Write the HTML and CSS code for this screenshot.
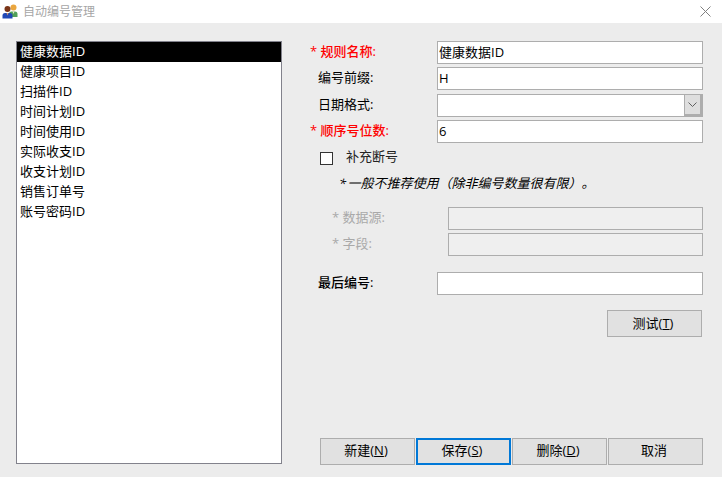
FILE: index.html
```html
<!DOCTYPE html>
<html lang="zh-CN">
<head>
<meta charset="utf-8">
<title>自动编号管理</title>
<link rel="stylesheet" href="styles.css">
</head>
<body>
<div class="titlebar">
  <svg class="app-icon" width="16" height="15" viewBox="0 0 16 15">
    <circle cx="11.500" cy="3.500" r="3" fill="#eaa63f"/>
    <path d="M7 13V10Q7 7.500 9.500 7.500H13Q15.500 7.500 15.500 10V13Z" fill="#52a05a"/>
    <path d="M10.500 7.500L11.500 10L12.500 7.500Z" fill="#f0ead0"/>
    <circle cx="5.500" cy="5" r="3" fill="#7a3518"/>
    <path d="M.5 14.500V11.500Q.5 9 3 9H8Q10.500 9 10.500 11.500V14.500Z" fill="#2148b5"/>
    <path d="M4.500 9L5.500 11.500L6.500 9Z" fill="#d89a68"/>
  </svg>
  <span class="title">自动编号管理</span>
  <svg class="close" width="11" height="11" viewBox="0 0 11 11">
    <path d="M.5 .5L10.500 10.500M10.500 .5L.5 10.500" stroke="#808080" stroke-width="1" fill="none"/>
  </svg>
</div>
<main class="main">
  <ul class="list">
    <li class="selected">健康数据ID</li>
    <li>健康项目ID</li>
    <li>扫描件ID</li>
    <li>时间计划ID</li>
    <li>时间使用ID</li>
    <li>实际收支ID</li>
    <li>收支计划ID</li>
    <li>销售订单号</li>
    <li>账号密码ID</li>
  </ul>
  <section class="form">
    <div class="row">
      <label class="label required">* 规则名称:</label>
      <input class="field" type="text" value="健康数据ID">
    </div>
    <div class="row">
      <label class="label plain">编号前缀:</label>
      <input class="field" type="text" value="H">
    </div>
    <div class="row row-date">
      <label class="label plain">日期格式:</label>
      <div class="combo">
        <span class="combo-text"></span>
        <span class="combo-btn">
          <svg width="9" height="5" viewBox="0 0 9 5"><path d="M.5 .5L4.500 4.500L8.500 .5" stroke="#606060" fill="none"/></svg>
        </span>
      </div>
    </div>
    <div class="row">
      <label class="label required">* 顺序号位数:</label>
      <input class="field" type="text" value="6">
    </div>
    <div class="check-row">
      <span class="checkbox"></span>
      <span class="check-label">补充断号</span>
    </div>
    <p class="note">* 一般不推荐使用（除非编号数量很有限）。</p>
    <div class="row row-disabled row-source">
      <label class="label muted">* 数据源:</label>
      <input class="field" type="text" disabled>
    </div>
    <div class="row row-disabled">
      <label class="label muted">* 字段:</label>
      <input class="field" type="text" disabled>
    </div>
    <div class="row row-last">
      <label class="label plain strong">最后编号:</label>
      <input class="field" type="text">
    </div>
    <div class="test-row">
      <button class="btn" type="button">测试(<u>T</u>)</button>
    </div>
    <div class="actions">
      <button class="btn" type="button">新建(<u>N</u>)</button>
      <button class="btn focus" type="button">保存(<u>S</u>)</button>
      <button class="btn" type="button">删除(<u>D</u>)</button>
      <button class="btn" type="button">取消</button>
    </div>
  </section>
</main>
</body>
</html>
```
FILE: styles.css
```css
* { box-sizing: border-box; }
html, body { margin: 0; padding: 0; }
body {
  width: 722px;
  height: 477px;
  overflow: hidden;
  background: #ececec;
  color: #000;
  font: 13px/20px "Open Sans", "Noto Sans CJK SC", sans-serif;
  text-spacing-trim: space-all;
  display: flex;
  flex-direction: column;
}
.titlebar {
  height: 23px;
  flex: none;
  background: #fff;
  display: flex;
  align-items: center;
  padding: 0 11px 0 2px;
}
.app-icon { flex: none; margin-right: 5px; }
.title { color: #a6a6a6; font-size: 12px; flex: 1; }
.main {
  flex: 1;
  display: flex;
  gap: 28px;
  padding: 18px 19px 12px 16px;
  min-height: 0;
}
.list {
  width: 266px;
  height: 423px;
  margin: 0;
  padding: 0;
  list-style: none;
  background: #fff;
  border: 1px solid #82828c;
  flex: none;
}
.list li {
  height: 20px;
  line-height: 19px;
  padding-left: 3px;
}
.list li.selected { background: #000; color: #fff; }
.form {
  width: 393px;
  display: flex;
  flex-direction: column;
}
.row {
  display: grid;
  grid-template-columns: 127px 1fr;
  grid-template-rows: 23px;
  height: 23px;
  align-items: center;
  margin-bottom: 3px;
}
.row-date { margin-top: 1px; }
.field {
  width: 100%;
  height: 23px;
  border: 1px solid #adadad;
  background: #fff;
  padding: 0 1px 2px;
  font: inherit;
  color: #000;
  outline: none;
  border-radius: 0;
}
.field:disabled { background: #efefef; }
.label { display: block; line-height: 18px; margin-bottom: 4px; }
.label.required { color: #f00; font-weight: 500; }
.label.plain { padding-left: 8px; }
.label.strong { font-weight: 500; }
.row-disabled { grid-template-columns: 138px 1fr; }
.label.muted { color: #a9a9a9; padding-left: 22px; }
.combo {
  height: 23px;
  border: 1px solid #adadad;
  background: #fff;
  display: flex;
  justify-content: flex-end;
}
.combo-btn {
  width: 18px;
  background: #dedede;
  border: 1px solid #adadad;
  border-width: 0 2px 2px 1px;
  display: flex;
  align-items: center;
  justify-content: center;
}
.check-row {
  display: flex;
  align-items: center;
  height: 20px;
  margin-top: 1px;
  padding-left: 10px;
}
.checkbox {
  width: 13px;
  height: 13px;
  border: 1px solid #333;
  background: #fff;
  margin: 2px 13px 0 0;
}
.check-label { position: relative; top: -1px; color: #222; }
.note {
  margin: 6px 0 0;
  padding-left: 29px;
  height: 20px;
  font-style: italic;
  word-spacing: -2px;
}
.row-source { margin-top: 14px; }
.row-last { margin-top: 13px; }
.test-row {
  display: flex;
  justify-content: flex-end;
  padding-right: 1px;
  margin-top: 12px;
}
.btn {
  width: 95px;
  height: 27px;
  background: #e1e1e1;
  border: 1px solid #adadad;
  border-radius: 0;
  padding: 0 3px 3px 0;
  font: inherit;
  color: #000;
}
.test-row .btn { padding-bottom: 1px; }
.btn.focus { border: 2px solid #0078d7; }
.actions {
  margin-top: auto;
  display: flex;
  gap: 1px;
  padding-left: 10px;
}
```
